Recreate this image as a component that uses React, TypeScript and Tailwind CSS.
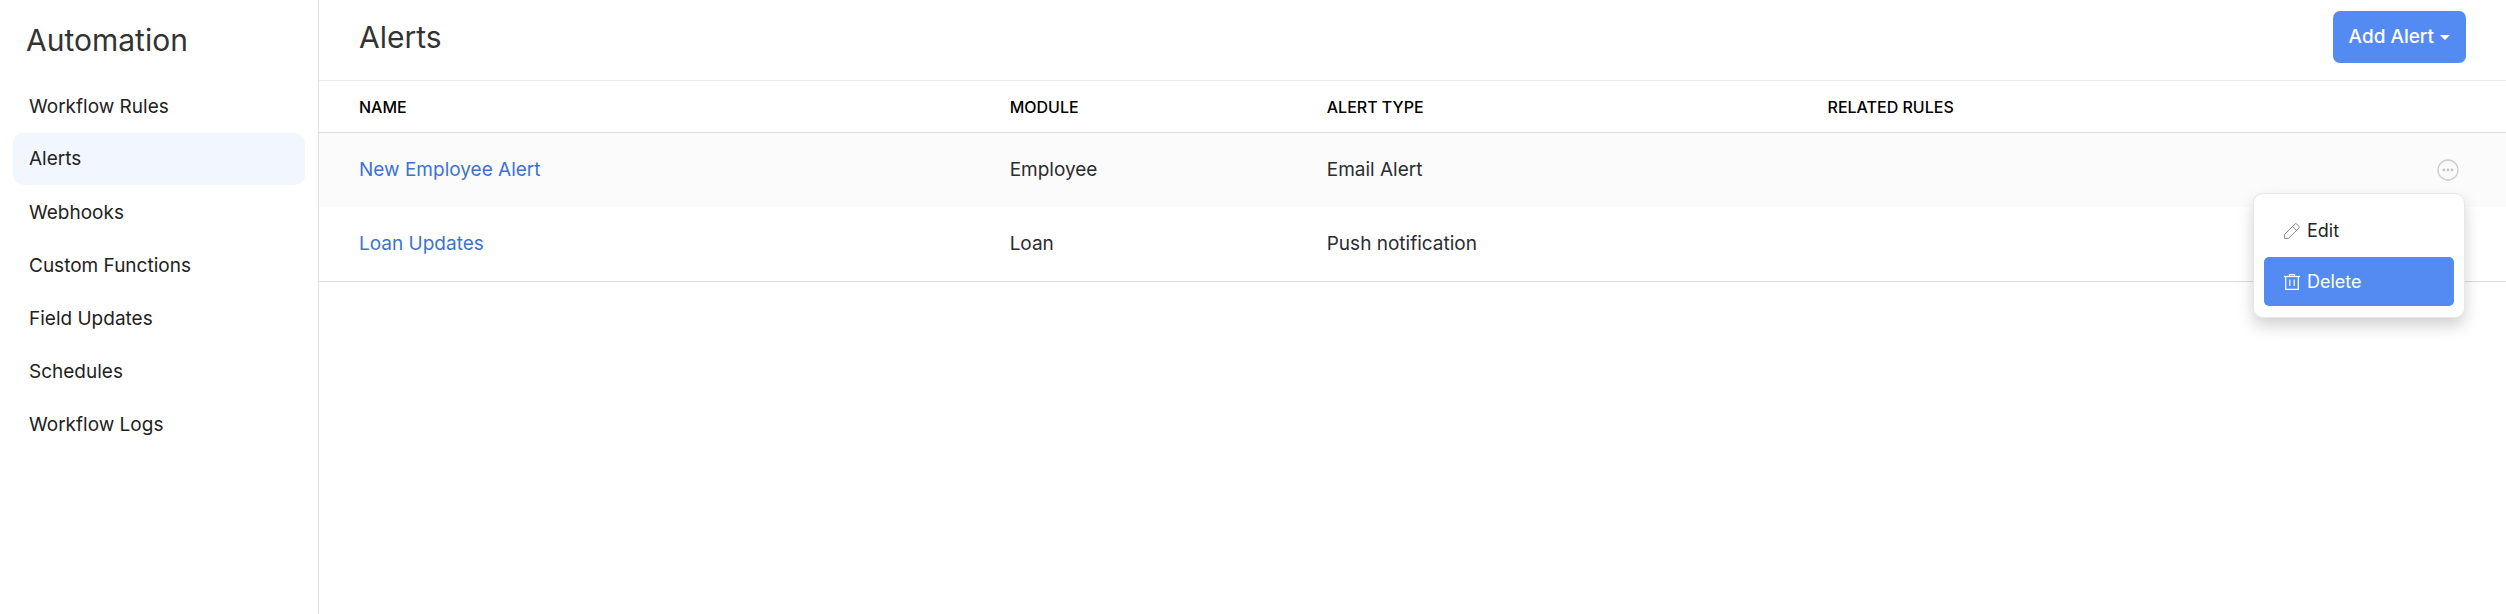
const navItems = [
  "Workflow Rules",
  "Alerts",
  "Webhooks",
  "Custom Functions",
  "Field Updates",
  "Schedules",
  "Workflow Logs",
];

interface Alert {
  id: number;
  name: string;
  module: string;
  type: string;
  rules: string;
}

const alerts: Alert[] = [
  { id: 1, name: "New Employee Alert", module: "Employee", type: "Email Alert", rules: "" },
  { id: 2, name: "Loan Updates", module: "Loan", type: "Push notification", rules: "" },
];

const MoreIcon = () => (
  <svg viewBox="0 0 22 22" className="w-[22px] h-[22px]" fill="none">
    <circle cx="11" cy="11" r="10" stroke="#cdcdcd" strokeWidth="1.3" />
    <g fill="#c8c8c8">
      <circle cx="7" cy="11" r="1.4" />
      <circle cx="11" cy="11" r="1.4" />
      <circle cx="15" cy="11" r="1.4" />
    </g>
  </svg>
);

const PencilIcon = () => (
  <svg
    viewBox="0 0 16 16"
    className="w-4 h-4"
    fill="none"
    stroke="#858585"
    strokeLinejoin="round"
  >
    <path d="M.6 15.4V11.4L11.2.9a.9.9 0 0 1 1.3 0l2.6 2.6a.9.9 0 0 1 0 1.3L4.6 15.4z" />
    <path d="M8.6 3.5l3.9 3.9" />
  </svg>
);

const TrashIcon = () => (
  <svg viewBox="0 0 16 16" className="w-4 h-4" fill="none" stroke="#ffffff" strokeWidth="1.2">
    <path d="M0 2.5h16" />
    <path d="M5.5 2.5V.6h5v1.9" />
    <path d="M1.7 2.5v12.9h12.6V2.5" />
    <path d="M5.8 5.5v6.5M10.2 5.5v6.5" />
  </svg>
);

const Sidebar = () => (
  <aside className="w-[319px] shrink-0 border-r border-[#e2e2e2] px-[13px] pt-5">
    <h1 className="px-[13px] text-[30px] leading-10 text-[#333333]">Automation</h1>
    <nav className="mt-5 flex flex-col gap-px">
      {navItems.map((item) => (
        <a
          key={item}
          href="#"
          className={
            item === "Alerts"
              ? "block rounded-[10px] bg-[#f1f6ff] px-4 py-3 text-[19px] leading-7 text-[#222222]"
              : "block rounded-[10px] px-4 pt-[13px] pb-[11px] text-[19px] leading-7 text-[#222222]"
          }
        >
          {item}
        </a>
      ))}
    </nav>
  </aside>
);

const RowMenu = () => (
  <div className="absolute right-[-6px] top-[34px] z-10 w-[212px] rounded-[10px] border border-[#e6e8ef] bg-white px-[10px] py-[11px] text-left shadow-[0_8px_16px_rgba(0,0,0,0.18)]">
    <button className="flex h-[51px] w-full items-center gap-[7px] rounded-[5px] px-5 text-[18px] text-[#222529]">
      <PencilIcon />
      Edit
    </button>
    <button className="mt-px flex h-[49px] w-full items-center gap-[7px] rounded-[5px] bg-[#548bf3] px-5 text-[18px] text-white">
      <TrashIcon />
      Delete
    </button>
  </div>
);

const AlertsTable = () => (
  <table className="w-full table-fixed border-separate border-spacing-0 border-b border-[#dcdcdc] text-left">
    <thead>
      <tr className="text-[16px] text-black *:h-[52px] *:border-b *:border-[#dcdcdc]">
        <th scope="col" className="w-[29.75%] pl-10 font-medium">NAME</th>
        <th scope="col" className="w-[14.5%] pl-10 font-medium">MODULE</th>
        <th scope="col" className="w-[22.9%] pl-10 font-medium">ALERT TYPE</th>
        <th scope="col" className="pl-10 font-medium">RELATED RULES</th>
        <th scope="col" aria-label="Actions" className="w-[120px]"></th>
      </tr>
    </thead>
    <tbody>
      {alerts.map((alert, index) => (
        <tr key={alert.id} className="h-[74px] text-[19px] text-[#2a2c31] odd:bg-[#fbfbfb]">
          <td className="pl-10">
            <a href="#" className="text-[#3c73d0]">{alert.name}</a>
          </td>
          <td className="pl-10">{alert.module}</td>
          <td className="pl-10">{alert.type}</td>
          <td className="pl-10">{alert.rules}</td>
          <td className="pr-[47px]">
            {index === 0 && (
              <div className="relative flex justify-end">
                <button aria-label="More">
                  <MoreIcon />
                </button>
                <RowMenu />
              </div>
            )}
          </td>
        </tr>
      ))}
    </tbody>
  </table>
);

const App = () => {
  return (
    <div className="flex min-h-screen bg-white font-['Inter',sans-serif]">
      <Sidebar />
      <main className="min-w-0 flex-1">
        <header className="flex h-[81px] items-start justify-between border-b border-[#ebebeb] px-10 pt-[11px]">
          <h2 className="mt-[6px] text-[30px] leading-10 text-[#333333]">Alerts</h2>
          <button className="flex h-[52px] items-center gap-[6px] rounded-[7px] bg-[#548bf3] px-4 text-[19px] font-medium text-white">
            Add Alert
            <span className="border-x-[5px] border-t-[5px] border-x-transparent border-t-white"></span>
          </button>
        </header>
        <AlertsTable />
      </main>
    </div>
  );
};

export default App;
